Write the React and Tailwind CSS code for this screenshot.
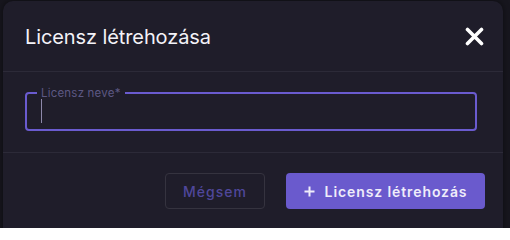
export default function App() {
  const font = { fontFamily: 'Inter, "Noto Sans", sans-serif' };
  return (
    <div className="w-[510px] h-[228px] overflow-hidden bg-[#17161e] pl-[3px] pt-[1px]" style={font}>
      <div className="w-[500px] h-[260px] bg-[#1f1d2a] rounded-[10px] shadow-[0_0_6px_rgba(0,0,0,0.5)] flex flex-col">
        <div className="h-[71px] flex items-center justify-between pl-[22px] pr-[19px] border-b border-[#2c2a38]">
          <h2 className="text-[20px] font-normal text-[#f3f2f8] tracking-[-0.1px] pt-[2px]">Licensz létrehozása</h2>
          <svg width="19" height="19" viewBox="0 0 19 19" className="mt-[1px]">
            <path d="M2.5 2.5 L16.5 16.5 M16.5 2.5 L2.5 16.5" stroke="#ffffff" strokeWidth="3.6" strokeLinecap="round" />
          </svg>
        </div>
        <div className="pt-[16px] pb-[21px] pl-[22px] pr-[26px] border-b border-[#2c2a38]">
          <fieldset className="relative h-[43px] border-2 border-[#6a5bcf] rounded-[4px] px-[10px] m-0">
            <legend className="px-[4px] text-[11.5px] leading-[10px] text-[#5d5883] tracking-[0.2px]">Licensz neve*</legend>
            <div className="ml-[4px] mt-[1px] w-[1px] h-[24px] bg-[#8d88aa]" />
          </fieldset>
        </div>
        <div className="flex justify-end gap-[21px] pt-[20px] pr-[18px]">
          <button className="w-[100px] h-[36px] rounded-[4px] border border-[#35333f] text-[#4f479b] text-[14px] font-medium tracking-[1px]">Mégsem</button>
          <button className="w-[199px] h-[36px] rounded-[4px] bg-[#6a5acd] text-[#efedfa] text-[14px] font-semibold tracking-[0.9px] flex items-center justify-center gap-[10px]">
            <svg width="11" height="11" viewBox="0 0 11 11">
              <path d="M5.5 0.5 V10.5 M0.5 5.5 H10.5" stroke="#efedfa" strokeWidth="2" />
            </svg>
            <span>Licensz létrehozás</span>
          </button>
        </div>
      </div>
    </div>
  );
}
